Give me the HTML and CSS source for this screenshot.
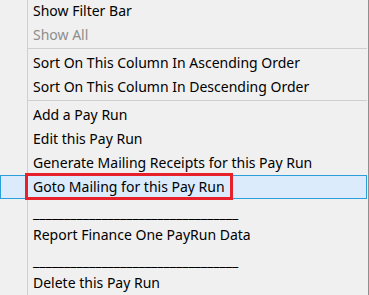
FILE: index.html
```html
<!DOCTYPE html>
<html>
<head>
<meta charset="utf-8">
<link rel="stylesheet" href="styles.css">
</head>
<body>
<div class="menu">
  <div class="item">Show Filter Bar</div>
  <div class="item disabled">Show All</div>
  <div class="sep"></div>
  <div class="item">Sort On This Column In Ascending Order</div>
  <div class="item">Sort On This Column In Descending Order</div>
  <div class="sep"></div>
  <div class="item">Add a Pay Run</div>
  <div class="item">Edit this Pay Run</div>
  <div class="item">Generate Mailing Receipts for this Pay Run</div>
  <div class="item hover">Goto Mailing for this Pay Run<span class="callout"></span></div>
  <div class="item line">_________________________________</div>
  <div class="item">Report Finance One PayRun Data</div>
  <div class="item line">_________________________________</div>
  <div class="item">Delete this Pay Run</div>
</div>
</body>
</html>
```
FILE: styles.css
```css
html, body {
  margin: 0;
  padding: 0;
  background: #f0f0f0;
}
.menu {
  width: 368px;
  height: 296px;
  margin-top: -1px;
  border-right: 1px solid #8f8f8f;
  background: linear-gradient(#cfcfcf, #cfcfcf) no-repeat 27px 0 / 1px 100%;
  font-family: "Noto Sans", sans-serif;
  font-size: 14px;
  color: #000;
  overflow: hidden;
}
.item {
  position: relative;
  height: 24px;
  line-height: 24px;
  padding-left: 33px;
  margin-right: 1px;
  white-space: nowrap;
  box-sizing: border-box;
}
.item.disabled {
  color: #8d8d8d;
}
.item.line {
  padding-top: 2px;
}
.item.hover {
  background: #dcebfc;
  border: 1px solid #2a9fdc;
  padding-left: 32px;
  line-height: 22px;
}
.sep {
  height: 4px;
  margin-left: 28px;
  margin-right: 1px;
  box-sizing: border-box;
  border-top: 1px solid transparent;
}
.sep::after {
  content: "";
  display: block;
  height: 1px;
  background: #cfcfcf;
}
.callout {
  position: absolute;
  left: 24px;
  top: -3px;
  width: 208px;
  height: 27px;
  border: 3px solid #e8202a;
  box-sizing: border-box;
}
```
